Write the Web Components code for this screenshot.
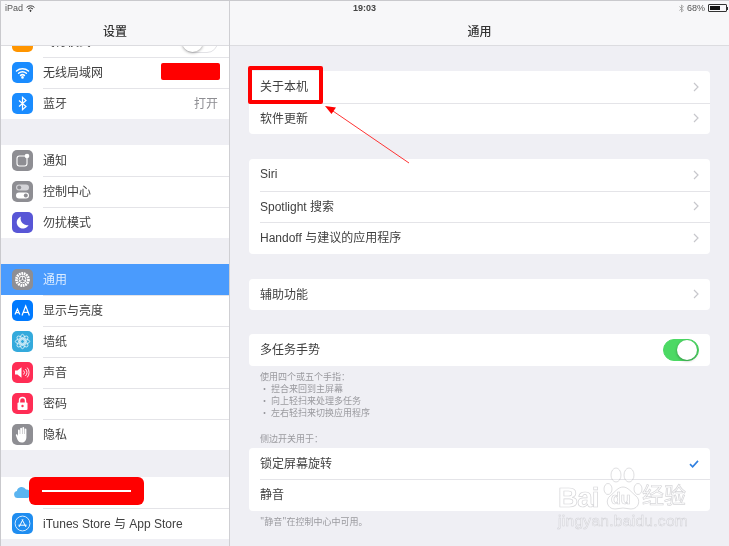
<!DOCTYPE html>
<html lang="zh">
<head>
<meta charset="utf-8">
<title>设置</title>
<style>
  html, body { margin: 0; height: 546px; overflow: hidden; background: #efeff4; }
  body { font-family: "Liberation Sans", "Noto Sans CJK SC", sans-serif; color: #333; }
  svg { display: block; }
</style>
</head>
<body>
<ipad-screen>
  <status-bar slot="status"></status-bar>

  <side-pane slot="side">
    <nav-title>设置</nav-title>
    <settings-group flush style="margin-top:-20px">
      <settings-row><app-icon slot="icon" color="#ff9500"></app-icon>飞行模式<toggle-switch slot="end"></toggle-switch></settings-row>
      <settings-row>
        <app-icon slot="icon" color="#1a8cff"><svg width="15" height="15" viewBox="0 0 15 15" fill="none" stroke="#fff" stroke-width="1.5" stroke-linecap="round"><path d="M1.5 6a9 9 0 0 1 12 0M3.6 8.3a6 6 0 0 1 7.8 0M5.6 10.4a3 3 0 0 1 3.8 0"/><circle cx="7.5" cy="12.4" r=".6" fill="#fff"/></svg></app-icon>无线局域网
      </settings-row>
      <settings-row value="打开">
        <app-icon slot="icon" color="#1a8cff"><svg width="15" height="15" viewBox="0 0 15 15" fill="none" stroke="#fff" stroke-width="1.2"><path d="M4 4.5l7 6-3.500 3.200V1.300L11 4.500l-7 6"/></svg></app-icon>蓝牙
      </settings-row>
    </settings-group>

    <settings-group style="margin-top:26px">
      <settings-row>
        <app-icon slot="icon" color="#8e8e93"><svg width="15" height="15" viewBox="0 0 15 15" fill="none"><rect x="2" y="3" width="10" height="10" rx="2.400" stroke="#fff" stroke-width="1.100"/><circle cx="12" cy="3" r="2.300" fill="#fff"/></svg></app-icon>通知
      </settings-row>
      <settings-row>
        <app-icon slot="icon" color="#8e8e93"><svg width="15" height="17" viewBox="0 0 15 17"><rect x="1" y="1.500" width="13" height="6" rx="3" fill="#d4d4d8"/><circle cx="4.200" cy="4.500" r="2" fill="#8e8e93"/><rect x="1" y="9.500" width="13" height="6" rx="3" fill="#fff"/><circle cx="10.800" cy="12.500" r="2" fill="#8e8e93"/></svg></app-icon>控制中心
      </settings-row>
      <settings-row>
        <app-icon slot="icon" color="#5856d6"><svg width="15" height="15" viewBox="0 0 15 15"><path d="M6 1.500a6.200 6.200 0 1 0 7.600 8.400A6.400 6.400 0 0 1 6 1.500z" fill="#fff"/></svg></app-icon>勿扰模式
      </settings-row>
    </settings-group>

    <settings-group style="margin-top:26px">
      <settings-row selected>
        <app-icon slot="icon" color="#8e8e93"><svg width="17" height="17" viewBox="0 0 17 17" fill="none" stroke="#fff"><circle cx="8.500" cy="8.500" r="6" stroke-width="2.800" stroke-dasharray="1.700 .7"/><circle cx="8.500" cy="8.500" r="3.400" stroke-width="1"/><path d="M8.500 5v3.500l3 1.700M8.500 8.500l-3 1.700" stroke-width=".8"/></svg></app-icon>通用
      </settings-row>
      <settings-row>
        <app-icon slot="icon" color="#007aff"><svg width="17" height="13" viewBox="0 0 17 13" fill="none" stroke="#fff" stroke-width="1.200"><path d="M1 10.500l2.400-5.600 2.400 5.600M1.900 8.600h3M8 11.500l3.700-9.500 3.700 9.500M9.300 8.400h4.800"/></svg></app-icon>显示与亮度
      </settings-row>
      <settings-row>
        <app-icon slot="icon" color="#34aadc"><svg width="17" height="17" viewBox="0 0 17 17" fill="none" stroke="#fff" stroke-width=".8" opacity=".9"><circle cx="8.500" cy="8.500" r="2"/><ellipse cx="8.500" cy="8.500" rx="2.800" ry="7.200"/><ellipse cx="8.500" cy="8.500" rx="2.800" ry="7.200" transform="rotate(45 8.500 8.500)"/><ellipse cx="8.500" cy="8.500" rx="2.800" ry="7.200" transform="rotate(90 8.500 8.500)"/><ellipse cx="8.500" cy="8.500" rx="2.800" ry="7.200" transform="rotate(135 8.500 8.500)"/></svg></app-icon>墙纸
      </settings-row>
      <settings-row>
        <app-icon slot="icon" color="#ff2d55"><svg width="17" height="13" viewBox="0 0 17 13" fill="none"><path d="M1 4.500h2.400L7.500 1.200v10.600L3.400 8.500H1z" fill="#fff"/><path d="M9.600 4.500a3 3 0 0 1 0 4M11.400 3a5.200 5.200 0 0 1 0 7M13.200 1.600a7.400 7.400 0 0 1 0 9.800" stroke="#fff" stroke-width=".9"/></svg></app-icon>声音
      </settings-row>
      <settings-row>
        <app-icon slot="icon" color="#ff2d55"><svg width="13" height="15" viewBox="0 0 13 15"><path d="M3.500 7V4.500a3 3 0 0 1 6 0V7" fill="none" stroke="#fff" stroke-width="1.400"/><rect x="1.500" y="6.500" width="10" height="7.500" rx="1" fill="#fff"/><circle cx="6.500" cy="10" r="1.200" fill="#ff2d55"/></svg></app-icon>密码
      </settings-row>
      <settings-row>
        <app-icon slot="icon" color="#8e8e93"><svg width="15" height="17" viewBox="0 0 15 17"><path d="M3 10V4.500a.9.9 0 0 1 1.800 0V8h.4V2.600a.9.9 0 0 1 1.800 0V8h.4V2a.9.9 0 0 1 1.800 0v6h.4V3.400a.9.9 0 0 1 1.800 0v7.800c0 3-1.800 5.300-4.600 5.300-2.400 0-3.400-1.100-4.400-3L.9 9.600c-.5-1 .9-1.800 1.500-.9z" fill="#fff"/></svg></app-icon>隐私
      </settings-row>
    </settings-group>

    <settings-group style="margin-top:27px">
      <settings-row>
        <app-icon slot="icon" color="#fff"><svg width="19" height="13" viewBox="0 0 19 13"><path d="M4.500 12a3.600 3.600 0 0 1-.6-7.100A4.900 4.900 0 0 1 13 3.600 4.300 4.300 0 0 1 14.600 12z" fill="#5ab4f0"/></svg></app-icon>iCloud
      </settings-row>
      <settings-row>
        <app-icon slot="icon" color="#1f8df0"><svg width="17" height="17" viewBox="0 0 17 17" fill="none" stroke="#fff"><circle cx="8.500" cy="8.500" r="7.400" stroke-width=".8"/><path d="M5 12l4-7.600M12 12L8 4.400M4.400 10.200h8.200" stroke-width="1"/></svg></app-icon>iTunes Store 与 App Store
      </settings-row>
    </settings-group>
  </side-pane>

  <main-pane slot="main">
    <nav-title>通用</nav-title>
    <div style="display:flex;flex-direction:column;padding:25px 19px 0 19px">
      <settings-group inset>
        <settings-row chevron>关于本机</settings-row>
        <settings-row chevron>软件更新</settings-row>
      </settings-group>
      <settings-group inset style="margin-top:25px">
        <settings-row chevron>Siri</settings-row>
        <settings-row chevron>Spotlight 搜索</settings-row>
        <settings-row chevron>Handoff 与建议的应用程序</settings-row>
      </settings-group>
      <settings-group inset style="margin-top:25px">
        <settings-row chevron>辅助功能</settings-row>
      </settings-group>
      <settings-group inset style="margin-top:24px">
        <settings-row>多任务手势<toggle-switch slot="end" on></toggle-switch></settings-row>
      </settings-group>
      <group-note style="margin-top:5px">使用四个或五个手指：<br>• 捏合来回到主屏幕<br>• 向上轻扫来处理多任务<br>• 左右轻扫来切换应用程序</group-note>
      <group-note style="margin-top:14px">侧边开关用于：</group-note>
      <settings-group inset style="margin-top:3px">
        <settings-row>锁定屏幕旋转<svg slot="end" width="10" height="8" viewBox="0 0 11 9" fill="none" stroke="#2f7fe0" stroke-width="1.800"><path d="M1 4.600l3 3 6-6.600"/></svg></settings-row>
        <settings-row>静音</settings-row>
      </settings-group>
      <group-note style="margin-top:5px">"静音"在控制中心中可用。</group-note>
      <settings-group inset style="margin-top:18px"><settings-row> </settings-row></settings-group>
    </div>
  </main-pane>
</ipad-screen>
<photo-marks></photo-marks>
<baidu-mark></baidu-mark>

<script>
class IpadScreen extends HTMLElement {
    constructor() {
        super();
        const shadow = this.attachShadow({mode: 'open'});
        shadow.innerHTML = `
<style>
  :host {
    display: grid;
    grid-template-columns: 229px 1fr;
    width: 729px;
    height: 546px;
    box-sizing: border-box;
    border-top: 1px solid #c9c9cd;
    border-left: 1px solid #c9c9cd;
    overflow: hidden;
    position: relative;
    filter: blur(.5px);
  }
  .bar { position: absolute; left: 0; right: 0; top: 0; z-index: 2; }
</style>
<div class="bar"><slot name="status"></slot></div>
<slot name="side"></slot>
<slot name="main"></slot>`;
    }
}

class StatusBar extends HTMLElement {
    constructor() {
        super();
        const shadow = this.attachShadow({mode: 'open'});
        shadow.innerHTML = `
<style>
  :host {
    display: grid;
    grid-template-columns: 1fr auto 1fr;
    align-items: center;
    height: 14px;
    padding: 0 1px 0 4px;
    font: 9px "Liberation Sans", sans-serif;
    color: #555;
  }
  .l, .r { display: flex; align-items: center; gap: 3px; }
  .r { justify-content: flex-end; }
  .time { font-weight: bold; color: #444; transform: translateX(-2px); }
  .bat { width: 15px; height: 4px; border: 1px solid #333; border-radius: 1px; padding: 1px; display: flex; }
  .bat i { display: block; width: 68%; background: #111; }
  .nub { width: 1px; height: 3px; background: #333; margin-left: -3px; }
</style>
<div class="l">iPad
  <svg width="9" height="7" viewBox="0 0 9 7" fill="none" stroke="#333" stroke-width="1"><path d="M.6 2.400a5.600 5.600 0 0 1 7.800 0M2 4a3.600 3.600 0 0 1 5 0"/><circle cx="4.500" cy="5.800" r=".6" fill="#333"/></svg>
</div>
<div class="time">19:03</div>
<div class="r">
  <svg width="5" height="9" viewBox="0 0 5 9" fill="none" stroke="#999" stroke-width=".8"><path d="M.4 2.500l4 3.600-1.900 2V.9l1.900 2-4 3.600"/></svg>
  <span>68%</span>
  <div class="bat"><i></i></div><div class="nub"></div>
</div>`;
    }
}

class SidePane extends HTMLElement {
    constructor() {
        super();
        const shadow = this.attachShadow({mode: 'open'});
        shadow.innerHTML = `
<style>
  :host {
    display: flex;
    flex-direction: column;
    border-right: 1px solid #cfcfd3;
    box-sizing: border-box;
    overflow: hidden;
    height: 545px;
    background: #efeff4;
  }
</style>
<slot></slot>`;
    }
}

class MainPane extends HTMLElement {
    constructor() {
        super();
        const shadow = this.attachShadow({mode: 'open'});
        shadow.innerHTML = `
<style>
  :host { display: block; overflow: hidden; height: 545px; background: #efeff4; }
</style>
<slot></slot>`;
    }
}

class NavTitle extends HTMLElement {
    constructor() {
        super();
        const shadow = this.attachShadow({mode: 'open'});
        shadow.innerHTML = `
<style>
  :host {
    display: flex;
    align-items: center;
    justify-content: center;
    flex: none;
    position: relative;
    z-index: 1;
    height: 45px;
    box-sizing: border-box;
    padding-top: 15px;
    background: #f7f7f9;
    border-bottom: 1px solid #dcdce0;
    font: 500 12px "Noto Sans CJK SC", sans-serif;
    color: #333;
  }
</style>
<slot></slot>`;
    }
}

class SettingsGroup extends HTMLElement {
    constructor() {
        super();
        const shadow = this.attachShadow({mode: 'open'});
        shadow.innerHTML = `
<style>
  :host {
    display: flex;
    flex-direction: column;
    flex: none;
    background: #fff;
    --row-h: 31px;
    --row-pad: 11px;
  }
  :host([inset]) { border-radius: 4px; --row-h: 31.500px; overflow: hidden; }
</style>
<slot></slot>`;
    }
}

class SettingsRow extends HTMLElement {
    static get observedAttributes () {
        return ['value'];
    }

    constructor() {
        super();
        const shadow = this.attachShadow({mode: 'open'});
        shadow.innerHTML = `
<style>
  :host {
    display: flex;
    align-items: stretch;
    height: var(--row-h, 31px);
    box-sizing: border-box;
    padding-left: var(--row-pad, 11px);
    font: 12px "Liberation Sans", "Noto Sans CJK SC", sans-serif;
    color: #404040;
  }
  :host([selected]) { background: #4a9bfd; color: #dcecff; }
  .icon { display: flex; align-items: center; }
  ::slotted(app-icon) { margin-right: 10px; }
  .body {
    flex: 1;
    display: flex;
    align-items: center;
    gap: 6px;
    padding-right: 11px;
    min-width: 0;
    white-space: nowrap;
    border-top: 1px solid transparent;
  }
  :host(:not(:first-child)) .body { border-top-color: #e4e4e8; }
  :host([selected]) .body { border-top-color: transparent; }
  .text { flex: 1; margin-bottom: 3px; }
  .value { color: #8e8e93; margin-bottom: 3px; }
  .chev { display: none; margin-bottom: 1px; }
  :host([chevron]) .chev { display: block; }
</style>
<div class="icon"><slot name="icon"></slot></div>
<div class="body">
  <span class="text"><slot></slot></span>
  <span class="value"></span>
  <slot name="end"></slot>
  <svg class="chev" width="6" height="10" viewBox="0 0 6 10" fill="none" stroke="#c7c7cc" stroke-width="1.200"><path d="M1 1l4 4-4 4"/></svg>
</div>`;
        this.valueText = shadow.querySelector('.value');
    }

    attributeChangedCallback(name, oldVal, newVal) {
        this.valueText.textContent = newVal;
    }
}

class AppIcon extends HTMLElement {
    constructor() {
        super();
        const shadow = this.attachShadow({mode: 'open'});
        shadow.innerHTML = `
<style>
  :host {
    display: flex;
    align-items: center;
    justify-content: center;
    flex: none;
    width: 21px;
    height: 21px;
    border-radius: 5px;
    background: var(--tile, #8e8e93);
  }
</style>
<slot></slot>`;
        this.style.setProperty('--tile', this.getAttribute('color'));
    }
}

class ToggleSwitch extends HTMLElement {
    constructor() {
        super();
        const shadow = this.attachShadow({mode: 'open'});
        shadow.innerHTML = `
<style>
  :host {
    display: block;
    flex: none;
    position: relative;
    width: 36px;
    height: 22px;
    box-sizing: border-box;
    border-radius: 11px;
    border: 1px solid #e2e2e6;
    background: #fff;
  }
  :host([on]) { background: #4cd964; border-color: #4cd964; }
  i {
    position: absolute;
    top: -1px;
    left: -1px;
    width: 21px;
    height: 21px;
    border-radius: 50%;
    background: #fff;
    box-shadow: 0 1px 3px rgba(0,0,0,.35);
  }
  :host([on]) i { left: 13px; top: 0; width: 20px; height: 20px; }
</style>
<i></i>`;
    }
}

class GroupNote extends HTMLElement {
    constructor() {
        super();
        const shadow = this.attachShadow({mode: 'open'});
        shadow.innerHTML = `
<style>
  :host {
    display: block;
    padding-left: 11px;
    font: 9px/12px "Noto Sans CJK SC", sans-serif;
    color: #9a9a9f;
  }
</style>
<slot></slot>`;
    }
}

// red annotations were drawn on the screenshot, so they stay sharp and sit over the blur
class PhotoMarks extends HTMLElement {
    constructor() {
        super();
        const shadow = this.attachShadow({mode: 'open'});
        shadow.innerHTML = `
<style>
  :host { position: absolute; inset: 0; pointer-events: none; }
  div { position: absolute; box-sizing: border-box; }
  .wifi { left: 161px; top: 63px; width: 59px; height: 17px; background: #f00; border-radius: 2px; }
  .cloud { left: 29px; top: 477px; width: 115px; height: 28px; background: #f00; border-radius: 6px; }
  .cloud i { position: absolute; left: 13px; top: 13px; width: 89px; height: 2px; background: #fff; }
  .box { left: 248px; top: 66px; width: 75px; height: 38px; border: 4px solid #f00; border-radius: 2px; }
  svg { position: absolute; left: 0; top: 0; }
</style>
<div class="wifi"></div>
<div class="cloud"><i></i></div>
<div class="box"></div>
<svg width="729" height="546" viewBox="0 0 729 546">
  <path d="M409 163L330 109" stroke="#f33" stroke-width="1" fill="none"/>
  <path d="M325 106l11 1.500-4.500 6.500z" fill="#f00"/>
</svg>`;
    }
}

class BaiduMark extends HTMLElement {
    constructor() {
        super();
        const shadow = this.attachShadow({mode: 'open'});
        shadow.innerHTML = `
<style>
  :host {
    position: absolute;
    left: 556px;
    top: 466px;
    width: 136px;
    height: 68px;
    pointer-events: none;
    font-family: "Liberation Sans", "Noto Sans CJK SC", sans-serif;
    color: rgba(255,255,255,.35);
    -webkit-text-stroke: .7px rgba(185,185,190,.6);
    filter: blur(.4px);
  }
  span { position: absolute; white-space: nowrap; line-height: 1; }
  .bai { left: 2px; top: 18px; font-size: 28px; font-weight: bold; letter-spacing: -1px; }
  .du { left: 55px; top: 25px; font-size: 16px; font-weight: bold; }
  .cn { left: 86px; top: 19px; font-size: 22px; }
  .url { left: 2px; top: 47px; font-size: 15.500px; letter-spacing: .3px; -webkit-text-stroke-width: .5px; }
  svg { position: absolute; left: 47px; top: 1px; }
</style>
<svg width="40" height="44" viewBox="0 0 40 44" fill="rgba(255,255,255,.25)" stroke="rgba(185,185,190,.6)" stroke-width=".8">
  <ellipse cx="5" cy="22" rx="4" ry="5.500"/>
  <ellipse cx="13" cy="8" rx="5" ry="7"/>
  <ellipse cx="26" cy="8" rx="5" ry="7"/>
  <ellipse cx="35" cy="22" rx="4" ry="5.500"/>
  <path d="M20 20c5 0 8 5 13 9 5 4 3 13-5 13-3 0-5-1-8-1s-5 1-8 1c-8 0-10-9-5-13 5-4 8-9 13-9z"/>
</svg>
<span class="bai">Bai</span>
<span class="du">du</span>
<span class="cn">经验</span>
<span class="url">jingyan.baidu.com</span>`;
    }
}

customElements.define('ipad-screen', IpadScreen);
customElements.define('status-bar', StatusBar);
customElements.define('side-pane', SidePane);
customElements.define('main-pane', MainPane);
customElements.define('nav-title', NavTitle);
customElements.define('settings-group', SettingsGroup);
customElements.define('settings-row', SettingsRow);
customElements.define('app-icon', AppIcon);
customElements.define('toggle-switch', ToggleSwitch);
customElements.define('group-note', GroupNote);
customElements.define('photo-marks', PhotoMarks);
customElements.define('baidu-mark', BaiduMark);
</script>
</body>
</html>
